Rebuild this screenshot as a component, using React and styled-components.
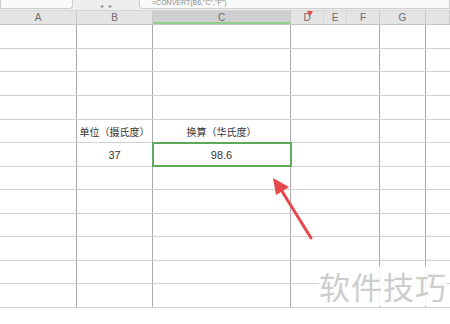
import React from 'react';
import styled, { createGlobalStyle } from 'styled-components';

const Global = createGlobalStyle`
  html, body { margin: 0; padding: 0; background: #fff; }
  body { font-family: "Noto Sans CJK SC", "Noto Sans", sans-serif; }
`;

const Page = styled.div`
  position: relative;
  width: 450px;
  height: 324px;
  overflow: hidden;
  background: #fff;
`;

const Toolbar = styled.div`
  height: 10px;
  display: flex;
  align-items: flex-end;
  background: #eeeeee;
  border-bottom: 1px solid #d6d6d6;
  overflow: hidden;
`;

const NameBox = styled.div`
  width: 71px;
  height: 9px;
  margin-bottom: 1px;
  background: #fafafa;
  border: 1px solid #cfcfcf;
  border-top: none;
  border-radius: 0 0 4px 0;
`;

const FxIcons = styled.div`
  width: 66px;
  display: flex;
  justify-content: center;
  gap: 6px;
  color: #888;
  font-family: "Liberation Sans", sans-serif;
  font-size: 6px;
  line-height: 8px;
`;

const FormulaBox = styled.div`
  flex: 1;
  height: 9px;
  margin-bottom: 1px;
  background: #fafafa;
  border: 1px solid #cfcfcf;
  border-top: none;
  border-radius: 0 0 0 4px;
  font-family: "Liberation Sans", sans-serif;
  font-size: 7px;
  color: #8a8a8a;
  line-height: 8px;
  padding-left: 12px;
`;

const HeaderRow = styled.div`
  display: flex;
  height: 13px;
  background: #e4e4e4;
  border-bottom: 1px solid #c6c6c6;
`;

const HeadCell = styled.div`
  position: relative;
  width: ${p => p.w}px;
  flex: none;
  box-sizing: border-box;
  display: flex;
  align-items: center;
  justify-content: center;
  font-family: "Liberation Sans", sans-serif;
  font-size: 10px;
  color: #6a6a6a;
  border-right: 1px solid ${p => (p.faint ? '#d8d8d8' : '#cacaca')};
  background: ${p => (p.active ? '#cfcfcf' : 'transparent')};
  box-shadow: ${p => (p.active ? 'inset 0 -2px 0 #8fcf8a' : 'none')};
`;

const Flag = styled.span`
  position: absolute;
  top: 0;
  left: 16px;
  width: 0;
  height: 0;
  border-left: 3px solid transparent;
  border-right: 3px solid transparent;
  border-top: 5px solid #e0454a;
`;

const Row = styled.div`
  display: flex;
  height: ${p => p.h}px;
  border-bottom: 1px solid #d2d2d2;
  box-sizing: border-box;
`;

const Cell = styled.div`
  width: ${p => p.w}px;
  flex: none;
  box-sizing: border-box;
  border-right: 1px solid ${p => (p.last ? 'transparent' : '#a9a9a9')};
  display: flex;
  align-items: center;
  justify-content: center;
  font-size: 10px;
  color: #333;
  outline: ${p => (p.selected ? '2px solid #5fa85b' : 'none')};
  outline-offset: -1px;
  position: relative;
`;

const Number = styled.span`
  font-family: "Liberation Sans", sans-serif;
  font-size: 11px;
`;

const Arrow = styled.svg`
  position: absolute;
  left: 262px;
  top: 170px;
`;

const Watermark = styled.div`
  position: absolute;
  left: 319px;
  top: 266px;
  font-size: 31px;
  letter-spacing: 1px;
  color: #cdcdcd;
  background: rgba(255, 255, 255, 0.85);
  line-height: 40px;
`;

const headers = [
  ['A', 77], ['B', 76], ['C', 138], ['D', 33], ['E', 23], ['F', 33], ['G', 46], ['', 24],
];
const widths = [77, 76, 138, 89, 46, 24];
const rowHeights = [24, 23, 24, 24, 23, 24, 23, 24, 23, 24, 23, 24];

const App = () => {
  return (
    <Page>
      <Global />
      <Toolbar>
        <NameBox />
        <FxIcons>
          <span>◂</span>
          <span>▸</span>
        </FxIcons>
        <FormulaBox>=CONVERT(B6,"C","F")</FormulaBox>
      </Toolbar>
      <HeaderRow>
        {headers.map(([label, w], i) => (
          <HeadCell key={i} w={w} active={label === 'C'} faint={label === 'D' || label === 'E'}>
            {label === 'D' && <Flag />}
            {label}
          </HeadCell>
        ))}
      </HeaderRow>
      {rowHeights.map((h, r) => (
        <Row key={r} h={h}>
          {widths.map((w, c) => {
            let content = null;
            if (r === 4 && c === 1) content = '单位（摄氏度）';
            if (r === 4 && c === 2) content = '换算（华氏度）';
            if (r === 5 && c === 1) content = <Number>37</Number>;
            if (r === 5 && c === 2) content = <Number>98.6</Number>;
            return (
              <Cell key={c} w={w} last={c === widths.length - 1} selected={r === 5 && c === 2}>
                {content}
              </Cell>
            );
          })}
        </Row>
      ))}
      <Arrow width="60" height="75" viewBox="0 0 60 75">
        <path d="M49 68 L18 18" stroke="#e8474c" strokeWidth="3" strokeLinecap="round" />
        <polygon points="11,8 27,17 14,25" fill="#e8474c" />
      </Arrow>
      <Watermark>软件技巧</Watermark>
    </Page>
  );
};

export default App;
